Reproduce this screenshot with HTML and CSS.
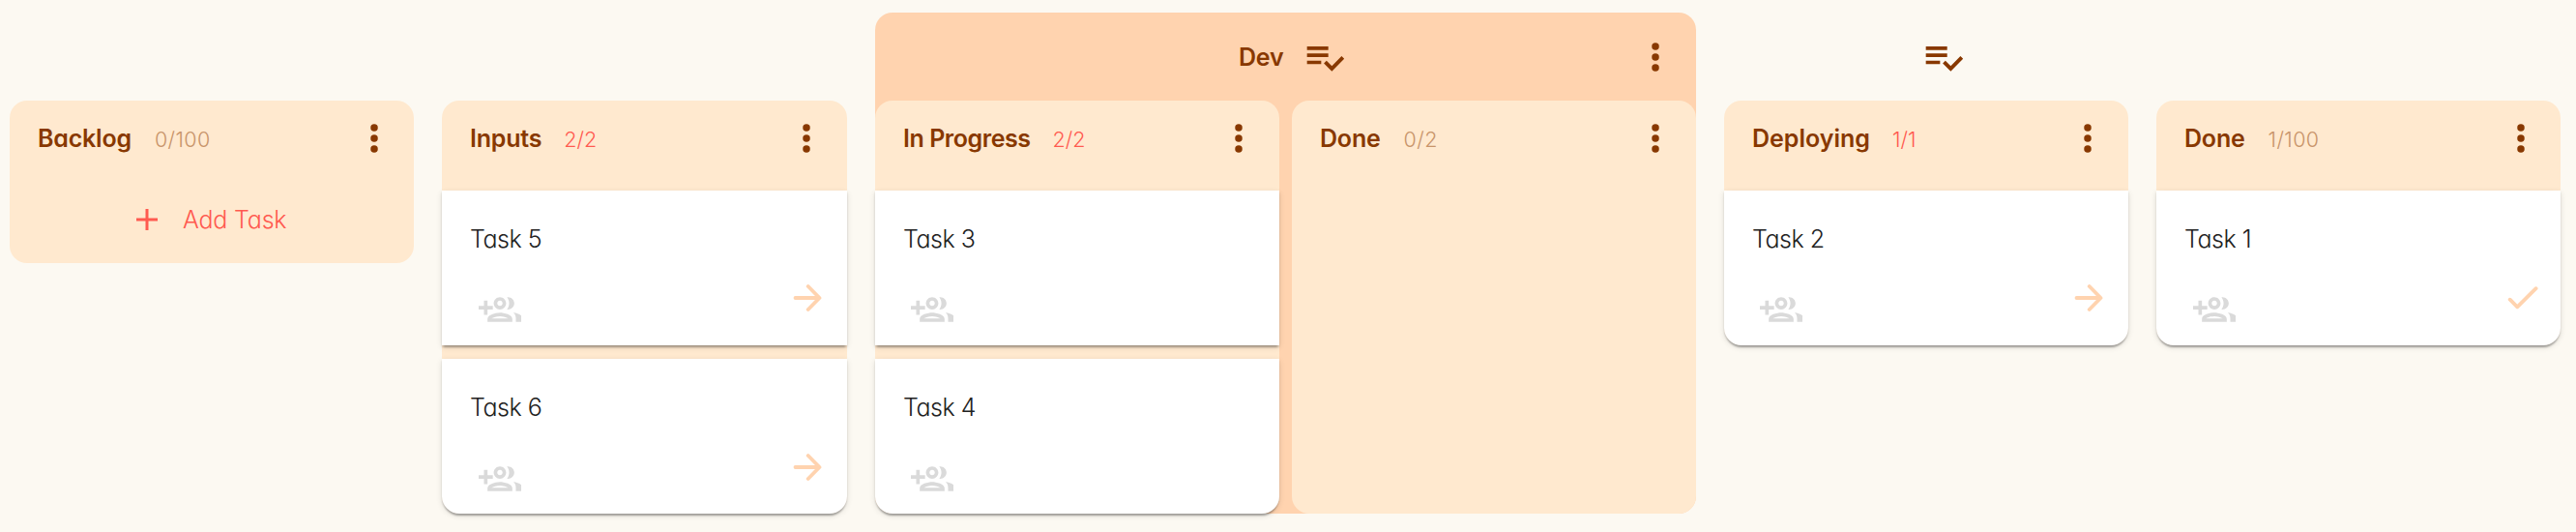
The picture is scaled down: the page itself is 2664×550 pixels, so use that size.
FILE: index.html
```html
<!DOCTYPE html>
<html lang="en">
<head>
<meta charset="utf-8">
<title>Board</title>
<link rel="stylesheet" href="styles.css">
</head>
<body>
<svg class="sprite" aria-hidden="true">
  <symbol id="more" viewBox="0 0 24 24"><circle cx="12" cy="6" r="2.05"/><circle cx="12" cy="12" r="2.05"/><circle cx="12" cy="18" r="2.05"/></symbol>
  <symbol id="checklist" viewBox="0 0 24 24"><path d="M14 10H2v2h12v-2zm0-4H2v2h12V6zM2 16h8v-2H2v2zm19.5-4.5L23 13l-6.99 7-4.51-4.5L13 14l3.01 3 5.49-5.5z"/></symbol>
  <symbol id="group-add" viewBox="0 0 24 24"><path d="M8 10H5V7H3v3H0v2h3v3h2v-3h3z"/><path transform="translate(3 0)" d="M9 13.75c-2.34 0-7 1.17-7 3.5V19h14v-1.75c0-2.33-4.66-3.5-7-3.5zM4.34 17c.84-.58 2.87-1.25 4.66-1.25s3.82.67 4.66 1.25H4.34zM9 12c1.93 0 3.5-1.57 3.5-3.5S10.93 5 9 5 5.5 6.57 5.5 8.5 7.07 12 9 12zm0-5c.83 0 1.5.67 1.5 1.5S9.83 10 9 10s-1.5-.67-1.5-1.5S8.17 7 9 7zm7.54 6.81c1.16.84 1.46 1.96 1.46 3.44V19h4v-1.75c0-2.02-3-3.17-5.46-3.44zM13.6 12c1.93 0 3.5-1.57 3.5-3.5S15.53 5 13.6 5c-.2 0-.4 0-.6.05.8.95 1.2 2.2 1.2 3.45s-.4 2.5-1.2 3.45c.2.05.4.05.6.05z"/></symbol>
  <symbol id="arrow" viewBox="0 0 30 30"><path d="M2.5 15H27M15.7 3L27.5 15L15.7 27"/></symbol>
  <symbol id="check" viewBox="0 0 32 26"><path d="M2.7 14.7L10.3 22.3L29.6 3.2"/></symbol>
  <symbol id="plus" viewBox="0 0 22 22"><path d="M11 0V22M0 11H22"/></symbol>
</svg>
<main class="board">
  <section class="column backlog">
    <header class="head"><h2 class="title">Backlog</h2><span class="count">0/100</span><svg class="more"><use href="#more"/></svg></header>
    <button class="add"><svg class="plus"><use href="#plus"/></svg><span class="add-label">Add Task</span></button>
  </section>
  <section class="column inputs">
    <header class="head"><h2 class="title">Inputs</h2><span class="count full">2/2</span><svg class="more"><use href="#more"/></svg></header>
    <div class="cards">
      <article class="card"><p class="task">Task 5</p><svg class="group"><use href="#group-add"/></svg><svg class="arrow"><use href="#arrow"/></svg></article>
      <article class="card"><p class="task">Task 6</p><svg class="group"><use href="#group-add"/></svg><svg class="arrow"><use href="#arrow"/></svg></article>
    </div>
  </section>
  <section class="stage">
    <header class="stage-head"><h2 class="title">Dev</h2><svg class="checklist"><use href="#checklist"/></svg><svg class="more"><use href="#more"/></svg></header>
    <div class="lanes">
      <section class="column">
        <header class="head"><h2 class="title tight">In Progress</h2><span class="count full">2/2</span><svg class="more"><use href="#more"/></svg></header>
        <div class="cards">
          <article class="card"><p class="task">Task 3</p><svg class="group"><use href="#group-add"/></svg></article>
          <article class="card"><p class="task">Task 4</p><svg class="group"><use href="#group-add"/></svg></article>
        </div>
      </section>
      <section class="column">
        <header class="head"><h2 class="title">Done</h2><span class="count">0/2</span><svg class="more"><use href="#more"/></svg></header>
      </section>
    </div>
  </section>
  <div class="single-stage">
    <header class="stage-head bare"><svg class="checklist"><use href="#checklist"/></svg></header>
    <section class="column">
      <header class="head"><h2 class="title loose">Deploying</h2><span class="count full">1/1</span><svg class="more"><use href="#more"/></svg></header>
      <div class="cards">
        <article class="card"><p class="task">Task 2</p><svg class="group"><use href="#group-add"/></svg><svg class="arrow"><use href="#arrow"/></svg></article>
      </div>
    </section>
  </div>
  <section class="column final">
    <header class="head"><h2 class="title">Done</h2><span class="count">1/100</span><svg class="more"><use href="#more"/></svg></header>
    <div class="cards">
      <article class="card"><p class="task">Task 1</p><svg class="group"><use href="#group-add"/></svg><svg class="check"><use href="#check"/></svg></article>
    </div>
  </section>
</main>
</body>
</html>
```
FILE: styles.css
```css
* { box-sizing: border-box; }
body {
  margin: 0;
  height: 550px;
  overflow: hidden;
  background: #fcf9f2;
  color: #222;
  font-family: Inter, Lato, sans-serif;
  font-feature-settings: "cv11" 1;
}
h2, p { margin: 0; }
svg { display: block; flex: none; fill: currentColor; }
.sprite { position: absolute; width: 0; height: 0; }

.board {
  display: flex;
  align-items: flex-start;
  gap: 29px;
  padding: 13px 0 0 10px;
}
.column {
  flex: none;
  width: 418px;
  border-radius: 18px;
  background: #ffe9cf;
}
.backlog, .inputs, .final { margin-top: 91px; }
.backlog { height: 168px; }
.inputs { width: 419px; }

.head {
  display: flex;
  align-items: center;
  height: 93px;
  padding: 0 20px 15px 29px;
  color: #883800;
}
.backlog .head, .final .head { padding-right: 19px; }
.title {
  font-size: 25px;
  font-weight: 600;
  line-height: 30px;
  letter-spacing: -.2px;
  white-space: nowrap;
  color: #883800;
}
.tight { letter-spacing: -.45px; }
.loose { letter-spacing: 0; }
.count {
  margin-left: 24px;
  padding-top: 1px;
  font-size: 21.5px;
  font-weight: 350;
  line-height: 30px;
  letter-spacing: .4px;
  white-space: nowrap;
  color: #c8946a;
}
.full { margin-left: 23px; letter-spacing: 0; color: #ff5a50; }
.more { width: 44px; height: 44px; margin-left: auto; }

.add {
  display: flex;
  align-items: center;
  width: 100%;
  height: 60px;
  padding: 0 0 0 131px;
  border: 0;
  background: none;
  color: #ff5a50;
  font: inherit;
  font-feature-settings: inherit;
}
.plus { width: 22px; height: 22px; stroke: currentColor; stroke-width: 3; }
.add-label {
  margin-left: 26px;
  font-size: 25px;
  font-weight: 350;
  line-height: 30px;
  letter-spacing: -.2px;
  white-space: nowrap;
}

.cards { display: grid; gap: 14px; }
.card {
  display: grid;
  grid-template-columns: 1fr auto;
  grid-template-rows: 70px 1fr;
  height: 160px;
  padding: 0 26px 0 29px;
  background: #fff;
  box-shadow: 0 4px 2px -2px rgba(0,0,0,.2), 0 2px 2px rgba(0,0,0,.14), 0 2px 6px rgba(0,0,0,.12);
}
.card:last-child { border-radius: 0 0 18px 18px; }
.task {
  grid-column: 1 / -1;
  padding-top: 35px;
  font-size: 25px;
  font-weight: 350;
  line-height: 30px;
  letter-spacing: -.5px;
  white-space: nowrap;
}
.group { width: 44px; height: 44px; margin: 31px 0 0 8px; color: #dadada; }
.inputs .group, .final .group { margin-left: 9px; }
.arrow, .check { fill: none; stroke: #ffd3af; stroke-width: 3.8; stroke-linecap: round; stroke-linejoin: round; }
.arrow { width: 30px; height: 30px; margin-top: 26px; }
.check { width: 32px; height: 26px; margin: 28px -3px 0 0; }
.card + .card .group { margin-top: 32px; }
.card + .card .arrow { margin-top: 27px; }

.stage { width: 849px; border-radius: 18px; background: #ffd3af; }
.stage-head {
  display: flex;
  align-items: center;
  justify-content: center;
  height: 91px;
  color: #883800;
}
.stage .stage-head { justify-content: flex-start; padding: 0 20px 0 376px; }
.checklist { width: 44px; height: 44px; margin-left: 21px; }
.bare { padding-left: 14px; }
.lanes { display: flex; gap: 13px; }
```
